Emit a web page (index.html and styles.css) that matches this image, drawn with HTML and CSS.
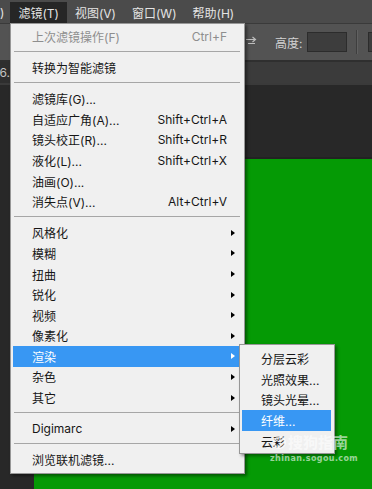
FILE: index.html
```html
<!DOCTYPE html>
<html lang="zh-CN">
<head>
  <meta charset="UTF-8" />
  <meta name="viewport" content="width=device-width, initial-scale=1.0"/>
  <title>滤镜 - 渲染</title>
  <link rel="stylesheet" href="styles.css">
</head>
<body>
  <div class="app">
    <div class="menubar">
      <span class="mb-item mb-cut">)</span>
      <span class="mb-item active">滤镜(T)</span>
      <span class="mb-item">视图(V)</span>
      <span class="mb-item">窗口(W)</span>
      <span class="mb-item">帮助(H)</span>
    </div>
    <div class="optbar">
      <svg class="swap-icon" width="12" height="10" viewBox="0 0 12 10">
        <path d="M0 3.5h9M6.5 1l3 2.5-3 2.5M2 7.5h7" stroke="#bdbdbd" stroke-width="1.2" fill="none"/>
      </svg>
      <span class="opt-label">高度:</span>
      <span class="opt-input"></span>
      <span class="opt-sep"></span>
      <span class="opt-input opt-input-cut"></span>
    </div>
    <div class="tabbar">
      <span class="tab">6.</span>
    </div>
    <div class="workspace">
      <div class="toolstrip"></div>
      <div class="stage">
        <div class="pasteboard"></div>
        <div class="canvas"></div>
      </div>
    </div>

    <div class="dropdown">
      <div class="mi disabled"><span>上次滤镜操作(F)</span><span class="mi-key">Ctrl+F</span></div>
      <div class="msep"></div>
      <div class="mi"><span>转换为智能滤镜</span></div>
      <div class="msep"></div>
      <div class="mi"><span>滤镜库(G)...</span></div>
      <div class="mi"><span>自适应广角(A)...</span><span class="mi-key">Shift+Ctrl+A</span></div>
      <div class="mi"><span>镜头校正(R)...</span><span class="mi-key">Shift+Ctrl+R</span></div>
      <div class="mi"><span>液化(L)...</span><span class="mi-key">Shift+Ctrl+X</span></div>
      <div class="mi"><span>油画(O)...</span></div>
      <div class="mi"><span>消失点(V)...</span><span class="mi-key">Alt+Ctrl+V</span></div>
      <div class="msep"></div>
      <div class="mi"><span>风格化</span><i class="arrow"></i></div>
      <div class="mi"><span>模糊</span><i class="arrow"></i></div>
      <div class="mi"><span>扭曲</span><i class="arrow"></i></div>
      <div class="mi"><span>锐化</span><i class="arrow"></i></div>
      <div class="mi"><span>视频</span><i class="arrow"></i></div>
      <div class="mi"><span>像素化</span><i class="arrow"></i></div>
      <div class="mi selected"><span>渲染</span><i class="arrow"></i></div>
      <div class="mi"><span>杂色</span><i class="arrow"></i></div>
      <div class="mi"><span>其它</span><i class="arrow"></i></div>
      <div class="msep"></div>
      <div class="mi"><span>Digimarc</span><i class="arrow"></i></div>
      <div class="msep"></div>
      <div class="mi"><span>浏览联机滤镜...</span></div>
    </div>

    <div class="submenu">
      <div class="si">分层云彩</div>
      <div class="si">光照效果...</div>
      <div class="si">镜头光晕...</div>
      <div class="si selected">纤维...</div>
      <div class="si">云彩</div>
    </div>

    <div class="watermark">
      <div class="wm-title"><span class="wm-logo"></span>搜狗指南</div>
      <div class="wm-url">zhinan.sogou.com</div>
    </div>
  </div>
</body>
</html>
```

FILE: styles.css
```css
body {
  margin: 0;
  padding: 0;
  background: #282828;
  font-family: Inter, "Noto Sans CJK SC", sans-serif;
  font-size: 12px;
  overflow: hidden;
}
.app {
  position: relative;
  width: 372px;
  height: 489px;
  display: flex;
  flex-direction: column;
  overflow: hidden;
}
.menubar {
  height: 23px;
  padding-top: 2px;
  box-sizing: border-box;
  background: #4b4b4b;
  display: flex;
  align-items: stretch;
}
.mb-item {
  display: flex;
  align-items: center;
  padding: 0 8px;
  color: #e4e4e4;
  white-space: nowrap;
}
.mb-item.mb-cut {
  padding: 0 6px 0 0;
}
.mb-item.active {
  background: #262626;
}
.optbar {
  height: 39px;
  box-sizing: border-box;
  border-top: 1px solid #3a3a3a;
  border-bottom: 2px solid #2f2f2f;
  background: #535353;
  display: flex;
  align-items: center;
  padding-left: 246px;
  white-space: nowrap;
}
.optbar > * {
  flex-shrink: 0;
}
.swap-icon {
  margin-top: -2px;
}
.opt-label {
  margin-left: 17px;
  color: #d2d2d2;
}
.opt-input {
  width: 38px;
  height: 18px;
  margin-left: 5px;
  background: #3d3d3d;
  border: 1px solid #2c2c2c;
}
.opt-input-cut {
  margin-left: 11px;
}
.opt-sep {
  width: 1px;
  height: 24px;
  margin-left: 9px;
  background: #3e3e3e;
  box-shadow: 1px 0 0 #616161;
}
.tabbar {
  height: 21px;
  background: #3b3b3b;
  display: flex;
}
.tab {
  width: 10px;
  background: #2e2e2e;
  color: #c4c4c4;
  display: flex;
  align-items: center;
  justify-content: flex-end;
  overflow: hidden;
}
.workspace {
  flex: 1;
  display: flex;
  border-top: 2px solid #3a3a3a;
}
.toolstrip {
  width: 34px;
  background: #282828;
}
.stage {
  flex: 1;
  display: flex;
  flex-direction: column;
}
.pasteboard {
  height: 72px;
  background: #282828;
  border-bottom: 2px solid #222;
}
.canvas {
  flex: 1;
  background: #059a05;
}

/* dropdown menu */
.dropdown {
  position: absolute;
  left: 10px;
  top: 23px;
  width: 235px;
  box-sizing: border-box;
  padding: 2px 0 3px;
  background: #f0f0f0;
  border: 1px solid #979797;
  box-shadow: 2px 2px 3px rgba(0,0,0,0.45);
  color: #161616;
}
.mi {
  height: 20.6px;
  margin: 0 5px 0 2px;
  padding-left: 19px;
  display: flex;
  align-items: center;
  white-space: nowrap;
}
.mi.disabled {
  color: #8e8e8e;
}
.mi.selected {
  background: #3897f3;
  color: #fff;
}
.mi-key {
  margin-left: auto;
  margin-right: 12px;
}
.arrow {
  margin-left: auto;
  margin-right: 4px;
  width: 0;
  height: 0;
  border-left: 4px solid #000;
  border-top: 3px solid transparent;
  border-bottom: 3px solid transparent;
}
.mi.selected .arrow {
  border-left-color: #fff;
}
.msep {
  height: 10.6px;
  margin: 0 4px 0 3px;
  position: relative;
}
.msep::after {
  content: "";
  position: absolute;
  left: 0;
  right: 0;
  top: 4px;
  height: 1px;
  background: #a6a6a6;
}

/* submenu */
.submenu {
  position: absolute;
  left: 239px;
  top: 344px;
  width: 96px;
  box-sizing: border-box;
  padding: 3px 0 2px;
  background: #f0f0f0;
  border: 1px solid #979797;
  box-shadow: 2px 2px 3px rgba(0,0,0,0.4);
  color: #161616;
}
.si {
  height: 20.7px;
  margin: 0 3px 0 2px;
  padding-left: 19px;
  display: flex;
  align-items: center;
  white-space: nowrap;
}
.si.selected {
  background: #3897f3;
  color: #fff;
}

/* watermark */
.watermark {
  position: absolute;
  left: 270px;
  top: 433px;
  width: 78px;
  color: rgba(255,255,255,0.6);
  pointer-events: none;
}
.wm-title {
  display: flex;
  align-items: center;
  justify-content: flex-end;
  font-size: 15px;
  font-weight: bold;
  line-height: 19px;
}
.wm-logo {
  width: 9px;
  height: 9px;
  margin-right: 2px;
  border: 2px solid rgba(255,255,255,0.6);
  border-radius: 50%;
}
.wm-url {
  font-family: "DejaVu Sans", sans-serif;
  font-size: 8px;
  font-weight: bold;
  letter-spacing: 0.4px;
  margin-top: 2px;
  text-align: right;
}
```
